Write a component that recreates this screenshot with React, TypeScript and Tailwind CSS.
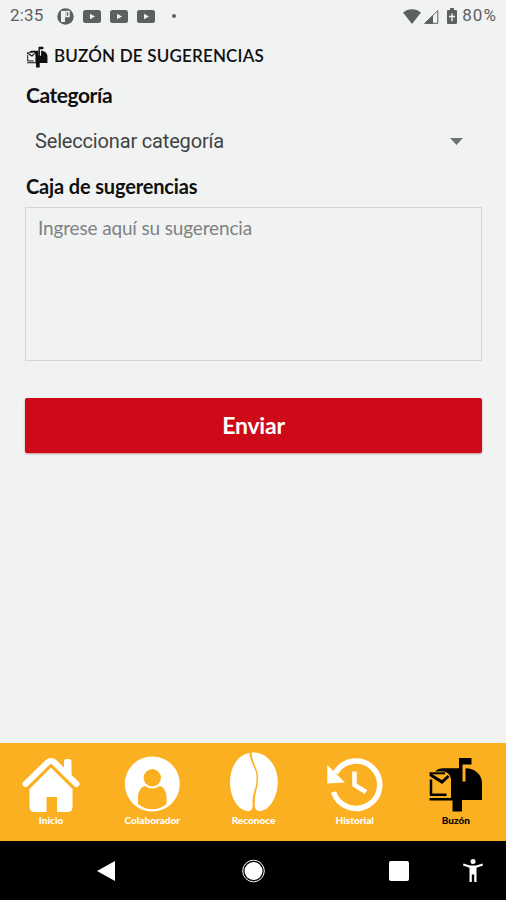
import { useState, type ReactNode } from 'react';

interface NavItem {
  id: string;
  label: string;
  icon: ReactNode;
}

function MailboxIcon({ className }: { className?: string }) {
  return (
    <svg className={className} viewBox="0 0 60 62" fill="currentColor">
      <path d="M34 7h12.500v6.500H37.500V32H34z" />
      <path d="M10 20.500c2-2 5-3.200 8-3.200h16v13.200h6.500V17.300c9 0 16.500 6 16.500 15V49H37v11.500h-9.500V49.500H4.500V47H26V29c0-4-2.500-7.500-7-8.500z" />
      <path d="M4.500 22.300H20" fill="none" stroke="currentColor" strokeWidth="2" />
      <path d="M5 23.500 17 31l6.500-6" fill="none" stroke="currentColor" strokeWidth="3" />
      <path d="M6 28.500V43.800h15.500" fill="none" stroke="currentColor" strokeWidth="2.500" />
    </svg>
  );
}

const navItems: NavItem[] = [
  {
    id: 'inicio',
    label: 'Inicio',
    icon: (
      <svg className="h-[62px] w-[60px]" viewBox="0 0 60 62" fill="currentColor">
        <path d="M43 22V10.500q0-2.500 2.500-2.500h2.500q2.500 0 2.500 2.500V29z" />
        <path d="M4.500 33 26.500 11.500q3.500-3 7 0L55.500 33" fill="none" stroke="currentColor" strokeWidth="6" strokeLinecap="round" />
        <path d="M30 16 51.500 37v19q0 5-5 5H36V46H25.500v15H14q-5.500 0-5.500-5V37z" />
        <path d="M8 37.500 30 15.500l22 22" fill="none" stroke="#fbb022" strokeWidth="1.500" />
      </svg>
    ),
  },
  {
    id: 'colaborador',
    label: 'Colaborador',
    icon: (
      <svg className="h-[62px] w-[60px]" viewBox="0 0 60 62">
        <circle cx="30.300" cy="33" r="27.500" fill="currentColor" />
        <circle cx="30.300" cy="26.800" r="8.700" fill="#fbb022" />
        <path d="M16 53V47c0-7 3-11 7-12q7.300 5 14.600 0c4 1 7 5 7 12v6c-8 7-20.600 7-28.600 0z" fill="#fbb022" />
      </svg>
    ),
  },
  {
    id: 'reconoce',
    label: 'Reconoce',
    icon: (
      <svg className="h-[62px] w-[60px]" viewBox="0 0 60 62" fill="currentColor">
        <path d="M26.500 2C14 4 7 17 7 31c0 15 8 29 18 29 4 0 5-3 4.500-8C29.500 42 33.500 37 33.500 29 34.500 17 27.500 14 26.500 2z" />
        <path d="M28.500 1.500C44 0 54.800 15 54.800 31c0 14-8 29-18 29-4 0-5.500-3-5-8C31.500 42 35 37 35 28 35.500 17 29.500 14 28.500 1.500z" />
      </svg>
    ),
  },
  {
    id: 'historial',
    label: 'Historial',
    icon: (
      <svg className="h-[62px] w-[60px]" viewBox="0 0 60 62" fill="none" stroke="currentColor">
        <path d="M11.500 22A23.700 23.700 0 1 1 9.500 41" strokeWidth="5.500" />
        <path d="M3.300 14 21 31.500 3.300 32.500z" fill="currentColor" stroke="none" />
        <path d="M30.500 20.500V34L42 41" strokeWidth="4.500" />
      </svg>
    ),
  },
  {
    id: 'buzon',
    label: 'Buzón',
    icon: <MailboxIcon className="h-[62px] w-[60px]" />,
  },
];

function StatusBar() {
  return (
    <header className="flex h-8 items-center pl-[10px] pr-[9px] font-[Roboto,sans-serif] text-[17px] text-[#5d6060]">
      <span className="w-[47px] tracking-[0.2px]">2:35</span>
      <svg className="h-[17px] w-[17px]" viewBox="0 0 17 17">
        <circle cx="8.500" cy="8.500" r="8.200" fill="#5d6060" />
        <path d="M4 3h4v11H4z" fill="#f1f3f3" />
        <path d="M9 3.500h3v5H9z" fill="none" stroke="#f1f3f3" strokeWidth="1.500" />
      </svg>
      <div className="ml-[9px] flex gap-[9px]">
        {[0, 1, 2].map((i) => (
          <svg key={i} className="h-[13px] w-[18px]" viewBox="0 0 18 13">
            <rect width="18" height="13" rx="2.500" fill="#5d6060" />
            <path d="M7 3.800v5.400l5-2.700z" fill="#f1f3f3" />
          </svg>
        ))}
      </div>
      <span className="ml-[17px] h-1 w-1 rounded-full bg-[#5d6060]" />
      <div className="ml-auto flex items-center">
        <svg className="h-[15px] w-[18px]" viewBox="0 0 18 15" fill="#5d6060">
          <path d="M0 3.500C5-1 13-1 18 3.500L9 15z" />
        </svg>
        <svg className="ml-[2px] h-[15px] w-[16px]" viewBox="0 0 16 15">
          <path d="M2 14.300 14.800 1.500v12.800z" fill="none" stroke="#5d6060" />
          <path d="M1 14.800 10 6v8.800z" fill="#5d6060" />
        </svg>
        <svg className="ml-[8px] h-[16px] w-[10px]" viewBox="0 0 10 16">
          <path d="M0 3q0-1 1-1h2V0h4v2h2q1 0 1 1v12q0 1-1 1H1q-1 0-1-1z" fill="#5d6060" />
          <path d="M4.300 5.500h1.400v2.300H8v1.400H5.700v4H4.300v-4H2V7.800h2.300z" fill="#f1f3f3" />
        </svg>
        <span className="ml-[5px] tracking-[1.1px]">80%</span>
      </div>
    </header>
  );
}

function SystemNav() {
  return (
    <div className="flex h-[59px] items-center bg-black pl-[97px] text-white">
      <svg className="h-[22px] w-[18px]" viewBox="0 0 18 22" fill="currentColor">
        <path d="M0 11 18 1v20z" />
      </svg>
      <svg className="ml-[126px] h-6 w-6" viewBox="0 0 24 24" fill="currentColor">
        <circle cx="12.500" cy="12" r="9" />
        <circle cx="12.500" cy="12" r="10.800" fill="none" stroke="currentColor" strokeWidth="1" />
      </svg>
      <span className="ml-[124px] h-5 w-5 rounded-[2px] bg-white" />
      <svg className="ml-[54px] h-[23px] w-5" viewBox="0 0 20 23" fill="currentColor">
        <circle cx="10" cy="2.500" r="2.500" />
        <path d="M.5 4.500 7 6.500h6l6.500-2 .5 2-6.500 2.200V23h-2.300v-7.500H8.800V23H6.500V8.700L0 6.500z" />
      </svg>
    </div>
  );
}

export default function App() {
  const [active, setActive] = useState('buzon');
  const [suggestion, setSuggestion] = useState('');

  return (
    <div className="flex h-[900px] w-[506px] flex-col overflow-hidden bg-[#f1f3f3] font-[Lato,sans-serif] text-[#101010]">
      <StatusBar />

      <main className="flex flex-1 flex-col px-[25px]">
        <h1 className="flex h-[47px] items-center whitespace-nowrap text-[17px] font-semibold">
          <MailboxIcon className="mr-[5px] h-6 w-6" />
          <span className="tracking-[0.18px]">BUZÓN DE SUGERENCIAS</span>
        </h1>

        {/* Category */}
        <h2 className="h-[33px] pl-px text-[21px] leading-8 font-bold tracking-[-0.45px]">Categoría</h2>
        <button type="button" className="flex h-[58px] items-center justify-between pl-[10px] pr-[18px] font-[Roboto,sans-serif] text-[20px] tracking-[-0.17px] text-[#414343]">
          <span>Seleccionar categoría</span>
          <svg className="h-[7px] w-[13px]" viewBox="0 0 13 7" fill="#707272">
            <path d="M0 0h13L6.500 7z" />
          </svg>
        </button>

        {/* Suggestion */}
        <label htmlFor="suggestion" className="h-[37px] pl-px text-[20px] leading-8 font-bold tracking-[-0.15px]">Caja de sugerencias</label>
        <textarea
          id="suggestion"
          value={suggestion}
          onChange={(e) => setSuggestion(e.target.value)}
          placeholder="Ingrese aquí su sugerencia"
          className="h-[154px] w-[457px] resize-none border border-[#d3d5d5] px-[12px] py-[6px] text-[19px] leading-7 tracking-[-0.15px] placeholder:text-[#7f8181]"
        />
        <button type="button" className="mt-[37px] h-[55px] w-[457px] rounded-[2px] bg-[#ce0a18] text-[23px] font-bold tracking-[-0.2px] text-white shadow-[0_1px_2px_rgba(120,0,0,0.4)]">
          Enviar
        </button>
      </main>

      <nav className="grid h-[98px] grid-cols-5 bg-[#fbb022]">
        {navItems.map((item) => (
          <button
            key={item.id}
            type="button"
            onClick={() => setActive(item.id)}
            className={`flex flex-col items-center pt-2 ${active === item.id ? 'text-black' : 'text-white'}`}
          >
            {item.icon}
            <span className="ml-px text-[10px] leading-[14px] font-black">{item.label}</span>
          </button>
        ))}
      </nav>
      <SystemNav />
    </div>
  );
}
